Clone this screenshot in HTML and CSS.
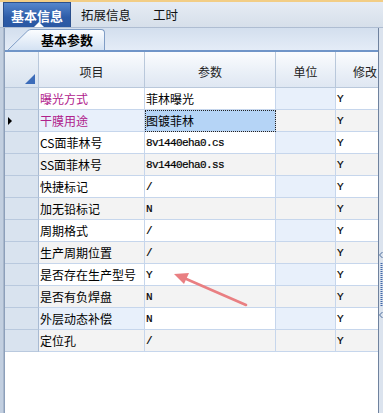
FILE: index.html
```html
<!DOCTYPE html>
<html>
<head>
<meta charset="utf-8">
<link rel="stylesheet" href="styles.css">
</head>
<body>
<div class="topline"></div>
<div class="tabbar">
  <div class="tab active">基本信息</div>
  <div class="tab">拓展信息</div>
  <div class="tab">工时</div>
</div>
<div class="body">
  <div class="lstrip"></div>
  <div class="content">
    <div class="subbar">
      <div class="subtab">
        <svg class="slant" width="23" height="21" viewBox="0 0 23 21"><path d="M0 21 L20 1.5 Q21.5 0.5 23 0.5 L23 21 Z" fill="url(#g)"/><path d="M0 21 L20 1.5 Q21.5 0.5 23 0.5" fill="none" stroke="#7f9dc6"/><defs><linearGradient id="g" x1="0" y1="0" x2="0" y2="1"><stop offset="0" stop-color="#fbfdff"/><stop offset="1" stop-color="#d4e2f3"/></linearGradient></defs></svg>
        <div class="subtab-body">基本参数</div>
      </div>
    </div>
    <div class="grid">
      <div class="hc corner"><span class="corner-tri"></span></div>
      <div class="hc">项目</div>
      <div class="hc">参数</div>
      <div class="hc">单位</div>
      <div class="hc clip">修改</div>

      <div class="ind"></div><div class="c item hi">曝光方式</div><div class="c cj">菲林曝光</div><div class="c unit"></div><div class="c mono">Y</div>
      <div class="ind"><span class="cur"></span></div><div class="c item hi alt itemsel">干膜用途</div><div class="c cj sel">图镀菲林</div><div class="c alt"></div><div class="c mono alt">Y</div>
      <div class="ind"></div><div class="c item">CS面菲林号</div><div class="c mono">8v1440eha0.cs</div><div class="c unit"></div><div class="c mono">Y</div>
      <div class="ind"></div><div class="c item alt">SS面菲林号</div><div class="c mono alt">8v1440eha0.ss</div><div class="c alt"></div><div class="c mono alt">Y</div>
      <div class="ind"></div><div class="c item">快捷标记</div><div class="c mono">/</div><div class="c unit"></div><div class="c mono">Y</div>
      <div class="ind"></div><div class="c item alt">加无铅标记</div><div class="c mono alt">N</div><div class="c alt"></div><div class="c mono alt">Y</div>
      <div class="ind"></div><div class="c item">周期格式</div><div class="c mono">/</div><div class="c unit"></div><div class="c mono">Y</div>
      <div class="ind"></div><div class="c item alt">生产周期位置</div><div class="c mono alt">/</div><div class="c alt"></div><div class="c mono alt">Y</div>
      <div class="ind"></div><div class="c item">是否存在生产型号</div><div class="c mono">Y</div><div class="c unit"></div><div class="c mono">Y</div>
      <div class="ind"></div><div class="c item alt">是否有负焊盘</div><div class="c mono alt">N</div><div class="c alt"></div><div class="c mono alt">Y</div>
      <div class="ind"></div><div class="c item itemsel">外层动态补偿</div><div class="c mono">N</div><div class="c unit"></div><div class="c mono">Y</div>
      <div class="ind"></div><div class="c item alt">定位孔</div><div class="c mono alt">/</div><div class="c alt"></div><div class="c mono alt">Y</div>
    </div>
  </div>
  <div class="rstrip">
    <svg width="4" height="72" viewBox="0 0 4 72">
      <path d="M3.5 0 L0.5 3 L3.5 6" fill="none" stroke="#4a6a9a"/>
      <path d="M2.5 11 V55" stroke="#3f66a8" stroke-width="2" stroke-dasharray="1 1"/>
      <path d="M3.5 60 L0.5 63 L3.5 66" fill="none" stroke="#4a6a9a"/>
    </svg>
  </div>
  <svg class="arrow" width="383" height="385" viewBox="0 28 383 385">
    <line x1="246" y1="305" x2="184" y2="278" stroke="#e97f82" stroke-width="2.6" stroke-linecap="round"/>
    <path d="M174 274 L189 273 L184 284 Z" fill="#e97f82"/>
  </svg>
</div>
</body>
</html>
```

FILE: styles.css
```css
* { box-sizing: border-box; }
html, body { margin: 0; padding: 0; }
body {
  width: 383px;
  height: 413px;
  overflow: hidden;
  background: #ffffff;
  font-family: "Noto Sans CJK SC", "Noto Sans", sans-serif;
  font-size: 12px;
  color: #000;
}
.topline {
  height: 2px;
  background: #f2cd85;
}
.tabbar {
  height: 26px;
  display: flex;
  align-items: stretch;
  background: linear-gradient(#e6ecf4, #d6dfea);
  border-bottom: 1px solid #aebdd2;
  padding-left: 3px;
}
.tab {
  display: flex;
  align-items: center;
  padding: 0 10px 1px 10px;
  font-size: 12.5px;
  color: #111;
}
.tab.active {
  position: relative;
  width: 68px;
  justify-content: center;
  padding: 0;
  color: #fff;
  font-weight: bold;
  font-size: 13px;
  background: linear-gradient(#5586cc, #2d5ca8 60%, #2a58a3);
  border: 1px solid #2a4f8c;
  border-bottom: none;
}
.tab.active::after {
  content: "";
  position: absolute;
  left: 30px;
  bottom: 0;
  border-left: 5px solid transparent;
  border-right: 5px solid transparent;
  border-bottom: 5px solid #ffffff;
}
.tab.active + .tab { padding-left: 10px; }
.tab:last-child { padding-left: 12px; }
.body {
  position: relative;
  display: flex;
  height: 385px;
}
.lstrip {
  width: 4px;
  background: #c2cfe0;
  border-right: 1px solid #a9b8cc;
}
.content {
  width: 375px;
  border-left: 1px solid #8c9fba;
  border-right: 1px solid #6f829e;
  background: #ffffff;
  display: flex;
  flex-direction: column;
}
.subbar {
  height: 24px;
  background: linear-gradient(#d3dfee, #e4ecf7);
  border-bottom: 2px solid #7095c8;
  display: flex;
  align-items: flex-end;
  padding-left: 3px;
}
.subtab {
  display: flex;
  align-items: flex-end;
  height: 21px;
}
.slant { display: block; }
.subtab-body {
  height: 21px;
  width: 74px;
  border-top: 1px solid #7f9dc6;
  border-right: 1px solid #7f9dc6;
  border-top-right-radius: 4px;
  background: linear-gradient(#fbfdff, #d4e2f3);
  font-weight: bold;
  font-size: 13px;
  display: flex;
  align-items: center;
  padding-left: 10px;
  padding-bottom: 1px;
}
.grid {
  display: grid;
  grid-template-columns: 34px 106px 131px 60px 42px;
  grid-template-rows: 36px repeat(12, 22px);
}
.hc {
  background: linear-gradient(#fbfcfe, #e9eff7 60%, #dfe7f2);
  border-right: 1px solid #b9c8db;
  border-bottom: 1px solid #b9c8db;
  display: flex;
  align-items: center;
  justify-content: center;
  padding-top: 3px;
  color: #222;
  font-size: 12px;
}
.hc.clip {
  justify-content: flex-start;
  padding-left: 17px;
  border-right: none;
  overflow: hidden;
  white-space: nowrap;
}
.hc.corner {
  position: relative;
  background: linear-gradient(#eef3f9, #d9e3ef);
}
.corner-tri {
  position: absolute;
  right: 3px;
  bottom: 3px;
  width: 0;
  height: 0;
  border-left: 10px solid transparent;
  border-bottom: 10px solid #3c6cb9;
}
.ind {
  background: #d9e3ef;
  border-right: 1px solid #a8bad2;
  border-bottom: 1px solid #b9c9de;
  display: flex;
  align-items: center;
  padding-left: 3px;
}
.cur {
  width: 0;
  height: 0;
  border-top: 4px solid transparent;
  border-bottom: 4px solid transparent;
  border-left: 4px solid #000;
}
.c {
  border-right: 1px solid #c6d6ec;
  border-bottom: 1px solid #c6d6ec;
  background: #ffffff;
  display: flex;
  align-items: center;
  padding-left: 1px;
  white-space: nowrap;
  overflow: hidden;
}
.c:nth-child(5n) { border-right: none; }
.c.alt { background: #f3f3f3; }
.c.unit { background: #e8f0fb; }
.c.itemsel { background: #e8f0fb; }
.item { font-size: 12px; padding-left: 1px; }
.hi { color: #b0218c; }
.cj { font-size: 12px; }
.mono {
  font-family: "Liberation Mono", "DejaVu Sans Mono", monospace;
  font-size: 11px;
  letter-spacing: -0.6px;
  color: #000;
  -webkit-text-stroke: 0.2px #000;
}
.c.sel {
  background: #b5d4f6;
  outline: 1px dotted #222;
  outline-offset: -1px;
}
.rstrip {
  width: 4px;
  background: #dbe3ee;
  padding-top: 224px;
}
.rstrip svg { display: block; }
.arrow {
  position: absolute;
  left: 0;
  top: 0;
  pointer-events: none;
}
```
